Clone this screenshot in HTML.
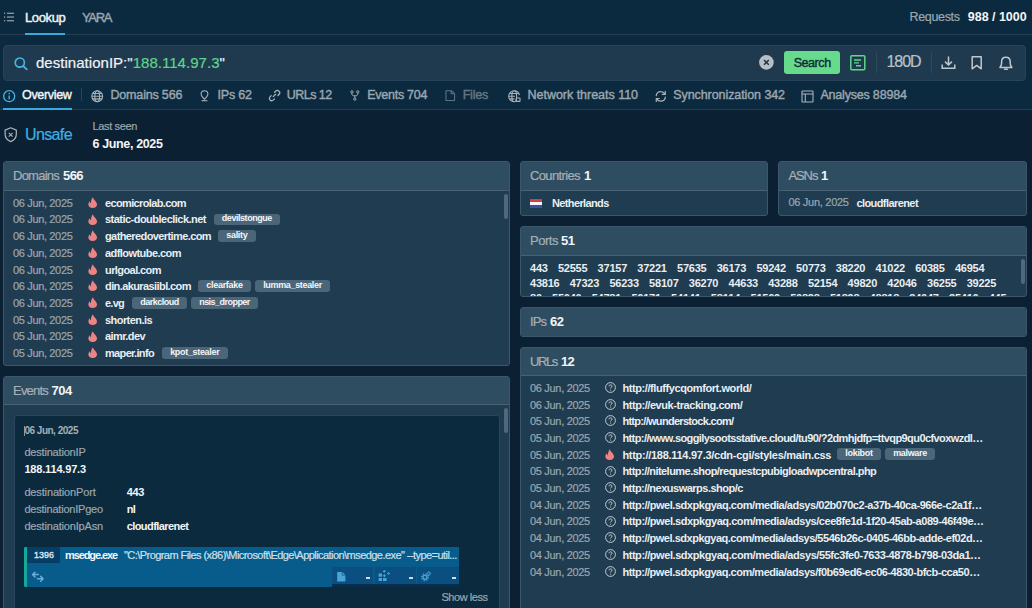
<!DOCTYPE html>
<html><head><meta charset="utf-8">
<style>
*{box-sizing:border-box;margin:0;padding:0}
html,body{width:1032px;height:608px;overflow:hidden;background:#0b2032;font-family:"Liberation Sans",sans-serif;color:#e8edf0}
.a{position:absolute;white-space:nowrap}
svg{position:absolute;overflow:visible}
</style></head><body>
<div class="a" style="left:0px;top:0px;width:1032px;height:109px;background:#0c2a3f;"></div>
<div class="a" style="left:0px;top:34px;width:1032px;height:1px;background:#243d50;"></div>
<div class="a" style="left:25px;top:33px;width:40px;height:2px;background:#3aa8d8;"></div>
<svg style="left:0;top:0" width="20" height="30"><g fill="#a3adb4"><rect x="4" y="12.6" width="1.2" height="1.2"/><rect x="4" y="16.4" width="1.2" height="1.2"/><rect x="4" y="20.1" width="1.2" height="1.2"/><rect x="7" y="12.7" width="7" height="1.1"/><rect x="7" y="16.5" width="7" height="1.1"/><rect x="7" y="20.2" width="7" height="1.1"/></g></svg>
<div class="a" style="left:25.00px;top:10.72px;font-size:13px;line-height:14.95px;color:#f2f5f7;-webkit-text-stroke:0.4px #f2f5f7;letter-spacing:-0.362px;">Lookup</div>
<div class="a" style="left:82.00px;top:10.72px;font-size:13px;line-height:14.95px;color:#9ba7af;-webkit-text-stroke:0.4px #9ba7af;letter-spacing:-1.359px;">YARA</div>
<div class="a" style="left:909.60px;top:9.88px;font-size:12.5px;line-height:14.37px;color:#9ba7af;-webkit-text-stroke:0.2px #9ba7af;letter-spacing:-0.352px;">Requests</div>
<div class="a" style="left:967.80px;top:9.88px;font-size:12.5px;line-height:14.37px;color:#f2f5f7;font-weight:bold;letter-spacing:-0.028px;">988 / 1000</div>
<div class="a" style="left:3px;top:45px;width:1023px;height:36px;background:#1f3a4e;border:1px solid #27435a;border-radius:4px"></div>
<svg style="left:14px;top:57px" width="15" height="13" viewBox="0 0 15 13"><circle cx="5.8" cy="5.6" r="4.6" fill="none" stroke="#45b4e4" stroke-width="1.7"/><path d="M9.2 9L12.8 12.4" stroke="#45b4e4" stroke-width="1.8" stroke-linecap="round"/></svg>
<div class="a" style="left:36px;top:52.7px;font-size:15px;line-height:20px;letter-spacing:0.03px;-webkit-text-stroke:0.2px;color:#f0f3f5">destinationIP:&quot;<span style="color:#5fd48a">188.114.97.3</span>&quot;</div>
<svg style="left:759px;top:55px" width="15" height="15" viewBox="0 0 15 15"><circle cx="7.4" cy="7.4" r="7.3" fill="#b7bfc5"/><path d="M5 5L9.8 9.8M9.8 5L5 9.8" stroke="#1d3447" stroke-width="1.5"/></svg>
<div class="a" style="left:784px;top:51px;width:56px;height:23px;background:#66db8c;border-radius:3px"></div>
<div class="a" style="left:793.70px;top:55.68px;font-size:12.5px;line-height:14.37px;color:#0f2b38;-webkit-text-stroke:0.4px #0f2b38;letter-spacing:-0.435px;">Search</div>
<svg style="left:850px;top:55px" width="16" height="16" viewBox="0 0 16 16"><rect x="0.8" y="0.8" width="14" height="14" rx="1" fill="none" stroke="#5ed68a" stroke-width="1.5"/><path d="M4 5H11M4 7.9H9M6 10.8H11" stroke="#5ed68a" stroke-width="1.4"/></svg>
<div class="a" style="left:876px;top:52px;width:1px;height:21px;background:#2f4a5d;"></div>
<div class="a" style="left:886.50px;top:52.76px;font-size:16px;line-height:18.4px;color:#b7c2ca;-webkit-text-stroke:0.2px #b7c2ca;letter-spacing:-1.070px;">180D</div>
<div class="a" style="left:931px;top:52px;width:1px;height:21px;background:#2f4a5d;"></div>
<svg style="left:941px;top:56px" width="16" height="14" viewBox="0 0 16 14"><path d="M7.5 0.5V9M4 5.6L7.5 9L11 5.6" fill="none" stroke="#c0c8ce" stroke-width="1.5"/><path d="M1.2 8.5V12.3H13.8V8.5" fill="none" stroke="#c0c8ce" stroke-width="1.5"/></svg>
<svg style="left:971px;top:56px" width="12" height="14" viewBox="0 0 12 14"><path d="M1.2 0.8H10.2V12.8L5.7 9.4L1.2 12.8Z" fill="none" stroke="#c0c8ce" stroke-width="1.5" stroke-linejoin="round"/></svg>
<svg style="left:998px;top:56px" width="16" height="15" viewBox="0 0 16 15"><path d="M2 11.4H13.8C12.6 10.2 12.2 9 12.2 7V5.8C12.2 3 10.3 1.2 7.9 1.2C5.5 1.2 3.6 3 3.6 5.8V7C3.6 9 3.2 10.2 2 11.4Z" fill="none" stroke="#c0c8ce" stroke-width="1.5" stroke-linejoin="round"/><path d="M6.5 13.2H9.3" stroke="#c0c8ce" stroke-width="1.5" stroke-linecap="round"/></svg>
<div class="a" style="left:0px;top:109px;width:1032px;height:1px;background:#243d50;"></div>
<div class="a" style="left:3px;top:108px;width:68.5px;height:2px;background:#3aa8d8;"></div>
<svg style="left:2.5px;top:89.5px" width="13" height="13" viewBox="0 0 13 13"><circle cx="6.2" cy="6.2" r="5.5" fill="none" stroke="#45b4e4" stroke-width="1.3"/><path d="M6.2 5.4V9.2" stroke="#45b4e4" stroke-width="1.4"/><circle cx="6.2" cy="3.6" r="0.8" fill="#45b4e4"/></svg>
<div class="a" style="left:22.00px;top:88.48px;font-size:12.5px;line-height:14.37px;color:#f2f5f7;-webkit-text-stroke:0.4px #f2f5f7;letter-spacing:-0.324px;">Overview</div>
<div class="a" style="left:81px;top:88px;width:1px;height:13px;background:#2b4558;"></div>
<svg style="left:91px;top:89.5px" width="13" height="13" viewBox="0 0 13 13"><g fill="none" stroke="#a9b3ba" stroke-width="1.1"><circle cx="6.2" cy="6.2" r="5.4"/><ellipse cx="6.2" cy="6.2" rx="2.4" ry="5.4"/><path d="M0.8 6.2H11.6M1.6 3.5H10.8M1.6 8.9H10.8"/></g></svg>
<div class="a" style="left:110.50px;top:88.48px;font-size:12.5px;line-height:14.37px;color:#9ba7af;-webkit-text-stroke:0.4px #9ba7af;letter-spacing:-0.178px;">Domains 566</div>
<svg style="left:200px;top:89.5px" width="10" height="13" viewBox="0 0 10 13"><g fill="none" stroke="#a9b3ba" stroke-width="1.1"><path d="M4.5 9.3C2.4 7.2 1.1 5.6 1.1 4.1A3.4 3.4 0 0 1 7.9 4.1C7.9 5.6 6.6 7.2 4.5 9.3Z"/><path d="M1.6 10.7H7.4"/></g></svg>
<div class="a" style="left:217.60px;top:88.48px;font-size:12.5px;line-height:14.37px;color:#9ba7af;-webkit-text-stroke:0.4px #9ba7af;letter-spacing:-0.240px;">IPs 62</div>
<svg style="left:268px;top:88.5px" width="13" height="13" viewBox="0 0 13 13"><g fill="none" stroke="#a9b3ba" stroke-width="1.3" stroke-linecap="round"><path d="M5.2 7.6L7.6 5.2"/><path d="M6.6 3.2L7.6 2.2C8.6 1.2 10.2 1.2 11 2.1C11.9 3 11.9 4.5 10.9 5.5L9.9 6.5"/><path d="M3.2 6.6L2.2 7.6C1.2 8.6 1.2 10.2 2.1 11C3 11.9 4.5 11.9 5.5 10.9L6.5 9.9"/></g></svg>
<div class="a" style="left:286.70px;top:88.48px;font-size:12.5px;line-height:14.37px;color:#9ba7af;-webkit-text-stroke:0.4px #9ba7af;letter-spacing:-0.520px;">URLs 12</div>
<svg style="left:349.5px;top:89.8px" width="10" height="11" viewBox="0 0 12 13" preserveAspectRatio="none"><g fill="none" stroke="#a9b3ba" stroke-width="1.1"><circle cx="2.3" cy="2.2" r="1.4"/><circle cx="9.3" cy="2.2" r="1.4"/><circle cx="5.8" cy="10.8" r="1.4"/><path d="M2.3 3.6V4.8C2.3 6 3.2 6.8 4.4 6.8H7.2C8.4 6.8 9.3 6 9.3 4.8V3.6M5.8 6.8V9.4"/></g></svg>
<div class="a" style="left:367.20px;top:88.48px;font-size:12.5px;line-height:14.37px;color:#9ba7af;-webkit-text-stroke:0.4px #9ba7af;letter-spacing:-0.255px;">Events 704</div>
<svg style="left:444.6px;top:89.8px" width="10.5" height="11.2" viewBox="0 0 11 13" preserveAspectRatio="none"><g fill="none" stroke="#62737f" stroke-width="1.1" stroke-linejoin="round"><path d="M1 0.8H6.6L10 4.2V12.2H1Z"/><path d="M6.4 0.8V4.4H10"/></g></svg>
<div class="a" style="left:462.70px;top:88.48px;font-size:12.5px;line-height:14.37px;color:#66777f;-webkit-text-stroke:0.4px #66777f;letter-spacing:-0.221px;">Files</div>
<svg style="left:508px;top:89.5px" width="13" height="13" viewBox="0 0 13 13"><g fill="none" stroke="#a9b3ba" stroke-width="1.1"><path d="M11.4 5.2C11 2.6 8.8 0.7 6.2 0.7C3.2 0.7 0.7 3.2 0.7 6.2C0.7 9.2 3.2 11.7 6.2 11.7"/><ellipse cx="6.2" cy="6.2" rx="2.4" ry="5.5"/><path d="M0.8 6.2H7M1.6 3.5H10.6M1.6 8.9H6.5"/><rect x="8.4" y="8" width="3.6" height="3.4" rx="0.5"/></g></svg>
<div class="a" style="left:527.50px;top:88.48px;font-size:12.5px;line-height:14.37px;color:#9ba7af;-webkit-text-stroke:0.4px #9ba7af;letter-spacing:-0.022px;">Network threats 110</div>
<svg style="left:655px;top:89.5px" width="12" height="13" viewBox="0 0 12 13"><g fill="none" stroke="#a9b3ba" stroke-width="1.2" stroke-linecap="round"><path d="M1.2 5.6C1.6 3.2 3.5 1.6 5.8 1.6C7.6 1.6 9 2.5 9.9 3.9"/><path d="M10.3 1.3V4.3H7.3"/><path d="M10.4 7.2C10 9.6 8.1 11.2 5.8 11.2C4 11.2 2.6 10.3 1.7 8.9"/><path d="M1.3 11.5V8.5H4.3"/></g></svg>
<div class="a" style="left:673.30px;top:88.48px;font-size:12.5px;line-height:14.37px;color:#9ba7af;-webkit-text-stroke:0.4px #9ba7af;letter-spacing:-0.083px;">Synchronization 342</div>
<svg style="left:801px;top:89.5px" width="13" height="13" viewBox="0 0 13 13"><g fill="none" stroke="#a9b3ba" stroke-width="1.1"><rect x="1" y="1" width="11" height="11" rx="0.6"/><path d="M1 4H12M4.3 4V12"/></g></svg>
<div class="a" style="left:820.40px;top:88.48px;font-size:12.5px;line-height:14.37px;color:#9ba7af;-webkit-text-stroke:0.4px #9ba7af;letter-spacing:-0.191px;">Analyses 88984</div>
<svg style="left:3.6px;top:127.3px" width="14" height="15.5" viewBox="0 0 15 16" preserveAspectRatio="none"><path d="M7.2 0.8L13.2 3.2V7.6C13.2 11.2 10.7 13.9 7.2 15.1C3.7 13.9 1.2 11.2 1.2 7.6V3.2Z" fill="none" stroke="#aab3ba" stroke-width="1.3" stroke-linejoin="round"/><path d="M5.2 6L9.2 10M9.2 6L5.2 10" stroke="#aab3ba" stroke-width="1.2"/></svg>
<div class="a" style="left:25.00px;top:126.26px;font-size:16px;line-height:18.4px;color:#3fb0e2;-webkit-text-stroke:0.2px #3fb0e2;letter-spacing:-0.622px;">Unsafe</div>
<div class="a" style="left:92.50px;top:119.86px;font-size:11px;line-height:12.65px;color:#9ba7af;-webkit-text-stroke:0.2px #9ba7af;letter-spacing:-0.361px;">Last seen</div>
<div class="a" style="left:92.50px;top:137.48px;font-size:12.5px;line-height:14.37px;color:#f2f5f7;font-weight:bold;letter-spacing:-0.363px;">6 June, 2025</div>
<div class="a" style="left:3px;top:161px;width:507px;height:205px;background:#203c51;border:1px solid #3c566a;border-radius:3px;overflow:hidden"><div style="position:absolute;left:0;top:0;right:0;height:29px;background:#2f4d61;border-bottom:1px solid #4a6174"></div></div>
<div class="a" style="left:13.00px;top:169.02px;font-size:13px;line-height:14.95px;color:#a6b0b7;-webkit-text-stroke:0.2px #a6b0b7;letter-spacing:-0.759px;">Domains</div>
<div class="a" style="left:63.00px;top:169.02px;font-size:13px;line-height:14.95px;color:#f2f5f7;font-weight:bold;letter-spacing:-0.568px;">566</div>
<div class="a" style="left:504px;top:194px;width:3.9px;height:25.3px;background:#4f697c;border-radius:2px"></div>
<div class="a" style="left:13.00px;top:196.76px;font-size:11px;line-height:12.65px;color:#9ba7af;-webkit-text-stroke:0.2px #9ba7af;letter-spacing:-0.349px;">06 Jun, 2025</div>
<svg style="left:88px;top:196.9px" width="9.4" height="11" viewBox="0 0 10 11" preserveAspectRatio="none"><path d="M5.2 0.2C5.6 1.8 6.6 2.6 7.6 3.7C8.8 5 9.6 6.2 9.6 7.6C9.6 9.6 7.7 11 5 11C2.3 11 0.4 9.6 0.4 7.5C0.4 6 1.2 4.9 2 4.2C2 5.2 2.4 6 3.1 6.3C3 4.4 3.6 2.3 5.2 0.2Z" fill="#ee8383"/></svg>
<div class="a" style="left:105.00px;top:196.76px;font-size:11px;line-height:12.65px;color:#e9eef1;font-weight:bold;letter-spacing:-0.635px;">ecomicrolab.com</div>
<div class="a" style="left:13.00px;top:213.46px;font-size:11px;line-height:12.65px;color:#9ba7af;-webkit-text-stroke:0.2px #9ba7af;letter-spacing:-0.349px;">06 Jun, 2025</div>
<svg style="left:88px;top:213.6px" width="9.4" height="11" viewBox="0 0 10 11" preserveAspectRatio="none"><path d="M5.2 0.2C5.6 1.8 6.6 2.6 7.6 3.7C8.8 5 9.6 6.2 9.6 7.6C9.6 9.6 7.7 11 5 11C2.3 11 0.4 9.6 0.4 7.5C0.4 6 1.2 4.9 2 4.2C2 5.2 2.4 6 3.1 6.3C3 4.4 3.6 2.3 5.2 0.2Z" fill="#ee8383"/></svg>
<div class="a" style="left:105.00px;top:213.46px;font-size:11px;line-height:12.65px;color:#e9eef1;font-weight:bold;letter-spacing:-0.524px;">static-doubleclick.net</div>
<div class="a" style="left:213.6px;top:213.5px;width:66.5px;height:11.6px;background:#4b6579;border-radius:3px"></div>
<div class="a" style="left:221.80px;top:213.41px;font-size:9px;line-height:10.35px;color:#f3f6f8;font-weight:bold;letter-spacing:-0.450px;">devilstongue</div>
<div class="a" style="left:13.00px;top:230.16px;font-size:11px;line-height:12.65px;color:#9ba7af;-webkit-text-stroke:0.2px #9ba7af;letter-spacing:-0.349px;">06 Jun, 2025</div>
<svg style="left:88px;top:230.3px" width="9.4" height="11" viewBox="0 0 10 11" preserveAspectRatio="none"><path d="M5.2 0.2C5.6 1.8 6.6 2.6 7.6 3.7C8.8 5 9.6 6.2 9.6 7.6C9.6 9.6 7.7 11 5 11C2.3 11 0.4 9.6 0.4 7.5C0.4 6 1.2 4.9 2 4.2C2 5.2 2.4 6 3.1 6.3C3 4.4 3.6 2.3 5.2 0.2Z" fill="#ee8383"/></svg>
<div class="a" style="left:105.00px;top:230.16px;font-size:11px;line-height:12.65px;color:#e9eef1;font-weight:bold;letter-spacing:-0.602px;">gatheredovertime.com</div>
<div class="a" style="left:218px;top:230.20000000000002px;width:37.7px;height:11.6px;background:#4b6579;border-radius:3px"></div>
<div class="a" style="left:226.20px;top:230.11px;font-size:9px;line-height:10.35px;color:#f3f6f8;font-weight:bold;letter-spacing:-0.283px;">sality</div>
<div class="a" style="left:13.00px;top:246.86px;font-size:11px;line-height:12.65px;color:#9ba7af;-webkit-text-stroke:0.2px #9ba7af;letter-spacing:-0.349px;">06 Jun, 2025</div>
<svg style="left:88px;top:247.0px" width="9.4" height="11" viewBox="0 0 10 11" preserveAspectRatio="none"><path d="M5.2 0.2C5.6 1.8 6.6 2.6 7.6 3.7C8.8 5 9.6 6.2 9.6 7.6C9.6 9.6 7.7 11 5 11C2.3 11 0.4 9.6 0.4 7.5C0.4 6 1.2 4.9 2 4.2C2 5.2 2.4 6 3.1 6.3C3 4.4 3.6 2.3 5.2 0.2Z" fill="#ee8383"/></svg>
<div class="a" style="left:105.00px;top:246.86px;font-size:11px;line-height:12.65px;color:#e9eef1;font-weight:bold;letter-spacing:-0.554px;">adflowtube.com</div>
<div class="a" style="left:13.00px;top:263.56px;font-size:11px;line-height:12.65px;color:#9ba7af;-webkit-text-stroke:0.2px #9ba7af;letter-spacing:-0.349px;">06 Jun, 2025</div>
<svg style="left:88px;top:263.7px" width="9.4" height="11" viewBox="0 0 10 11" preserveAspectRatio="none"><path d="M5.2 0.2C5.6 1.8 6.6 2.6 7.6 3.7C8.8 5 9.6 6.2 9.6 7.6C9.6 9.6 7.7 11 5 11C2.3 11 0.4 9.6 0.4 7.5C0.4 6 1.2 4.9 2 4.2C2 5.2 2.4 6 3.1 6.3C3 4.4 3.6 2.3 5.2 0.2Z" fill="#ee8383"/></svg>
<div class="a" style="left:105.00px;top:263.56px;font-size:11px;line-height:12.65px;color:#e9eef1;font-weight:bold;letter-spacing:-0.580px;">urlgoal.com</div>
<div class="a" style="left:13.00px;top:280.26px;font-size:11px;line-height:12.65px;color:#9ba7af;-webkit-text-stroke:0.2px #9ba7af;letter-spacing:-0.349px;">06 Jun, 2025</div>
<svg style="left:88px;top:280.4px" width="9.4" height="11" viewBox="0 0 10 11" preserveAspectRatio="none"><path d="M5.2 0.2C5.6 1.8 6.6 2.6 7.6 3.7C8.8 5 9.6 6.2 9.6 7.6C9.6 9.6 7.7 11 5 11C2.3 11 0.4 9.6 0.4 7.5C0.4 6 1.2 4.9 2 4.2C2 5.2 2.4 6 3.1 6.3C3 4.4 3.6 2.3 5.2 0.2Z" fill="#ee8383"/></svg>
<div class="a" style="left:105.00px;top:280.26px;font-size:11px;line-height:12.65px;color:#e9eef1;font-weight:bold;letter-spacing:-0.592px;">din.akurasiibl.com</div>
<div class="a" style="left:198px;top:280.29999999999995px;width:53px;height:11.6px;background:#4b6579;border-radius:3px"></div>
<div class="a" style="left:206.20px;top:280.21px;font-size:9px;line-height:10.35px;color:#f3f6f8;font-weight:bold;letter-spacing:-0.267px;">clearfake</div>
<div class="a" style="left:255px;top:280.29999999999995px;width:75px;height:11.6px;background:#4b6579;border-radius:3px"></div>
<div class="a" style="left:263.20px;top:280.21px;font-size:9px;line-height:10.35px;color:#f3f6f8;font-weight:bold;letter-spacing:-0.338px;">lumma_stealer</div>
<div class="a" style="left:13.00px;top:296.96px;font-size:11px;line-height:12.65px;color:#9ba7af;-webkit-text-stroke:0.2px #9ba7af;letter-spacing:-0.349px;">06 Jun, 2025</div>
<svg style="left:88px;top:297.1px" width="9.4" height="11" viewBox="0 0 10 11" preserveAspectRatio="none"><path d="M5.2 0.2C5.6 1.8 6.6 2.6 7.6 3.7C8.8 5 9.6 6.2 9.6 7.6C9.6 9.6 7.7 11 5 11C2.3 11 0.4 9.6 0.4 7.5C0.4 6 1.2 4.9 2 4.2C2 5.2 2.4 6 3.1 6.3C3 4.4 3.6 2.3 5.2 0.2Z" fill="#ee8383"/></svg>
<div class="a" style="left:105.00px;top:296.96px;font-size:11px;line-height:12.65px;color:#e9eef1;font-weight:bold;letter-spacing:-0.758px;">e.vg</div>
<div class="a" style="left:132px;top:297.0px;width:55px;height:11.6px;background:#4b6579;border-radius:3px"></div>
<div class="a" style="left:140.20px;top:296.91px;font-size:9px;line-height:10.35px;color:#f3f6f8;font-weight:bold;letter-spacing:-0.489px;">darkcloud</div>
<div class="a" style="left:191px;top:297.0px;width:67px;height:11.6px;background:#4b6579;border-radius:3px"></div>
<div class="a" style="left:199.20px;top:296.91px;font-size:9px;line-height:10.35px;color:#f3f6f8;font-weight:bold;letter-spacing:-0.533px;">nsis_dropper</div>
<div class="a" style="left:13.00px;top:313.66px;font-size:11px;line-height:12.65px;color:#9ba7af;-webkit-text-stroke:0.2px #9ba7af;letter-spacing:-0.349px;">05 Jun, 2025</div>
<svg style="left:88px;top:313.8px" width="9.4" height="11" viewBox="0 0 10 11" preserveAspectRatio="none"><path d="M5.2 0.2C5.6 1.8 6.6 2.6 7.6 3.7C8.8 5 9.6 6.2 9.6 7.6C9.6 9.6 7.7 11 5 11C2.3 11 0.4 9.6 0.4 7.5C0.4 6 1.2 4.9 2 4.2C2 5.2 2.4 6 3.1 6.3C3 4.4 3.6 2.3 5.2 0.2Z" fill="#ee8383"/></svg>
<div class="a" style="left:105.00px;top:313.66px;font-size:11px;line-height:12.65px;color:#e9eef1;font-weight:bold;letter-spacing:-0.559px;">shorten.is</div>
<div class="a" style="left:13.00px;top:330.36px;font-size:11px;line-height:12.65px;color:#9ba7af;-webkit-text-stroke:0.2px #9ba7af;letter-spacing:-0.349px;">05 Jun, 2025</div>
<svg style="left:88px;top:330.5px" width="9.4" height="11" viewBox="0 0 10 11" preserveAspectRatio="none"><path d="M5.2 0.2C5.6 1.8 6.6 2.6 7.6 3.7C8.8 5 9.6 6.2 9.6 7.6C9.6 9.6 7.7 11 5 11C2.3 11 0.4 9.6 0.4 7.5C0.4 6 1.2 4.9 2 4.2C2 5.2 2.4 6 3.1 6.3C3 4.4 3.6 2.3 5.2 0.2Z" fill="#ee8383"/></svg>
<div class="a" style="left:105.00px;top:330.36px;font-size:11px;line-height:12.65px;color:#e9eef1;font-weight:bold;letter-spacing:-0.584px;">aimr.dev</div>
<div class="a" style="left:13.00px;top:347.06px;font-size:11px;line-height:12.65px;color:#9ba7af;-webkit-text-stroke:0.2px #9ba7af;letter-spacing:-0.349px;">05 Jun, 2025</div>
<svg style="left:88px;top:347.2px" width="9.4" height="11" viewBox="0 0 10 11" preserveAspectRatio="none"><path d="M5.2 0.2C5.6 1.8 6.6 2.6 7.6 3.7C8.8 5 9.6 6.2 9.6 7.6C9.6 9.6 7.7 11 5 11C2.3 11 0.4 9.6 0.4 7.5C0.4 6 1.2 4.9 2 4.2C2 5.2 2.4 6 3.1 6.3C3 4.4 3.6 2.3 5.2 0.2Z" fill="#ee8383"/></svg>
<div class="a" style="left:105.00px;top:347.06px;font-size:11px;line-height:12.65px;color:#e9eef1;font-weight:bold;letter-spacing:-0.664px;">maper.info</div>
<div class="a" style="left:162px;top:347.09999999999997px;width:65.5px;height:11.6px;background:#4b6579;border-radius:3px"></div>
<div class="a" style="left:170.20px;top:347.01px;font-size:9px;line-height:10.35px;color:#f3f6f8;font-weight:bold;letter-spacing:-0.325px;">kpot_stealer</div>
<div class="a" style="left:3px;top:376px;width:507px;height:240px;background:#203c51;border:1px solid #3c566a;border-radius:3px;overflow:hidden"><div style="position:absolute;left:0;top:0;right:0;height:28px;background:#2f4d61;border-bottom:1px solid #4a6174"></div></div>
<div class="a" style="left:13.00px;top:383.62px;font-size:13px;line-height:14.95px;color:#a6b0b7;-webkit-text-stroke:0.2px #a6b0b7;letter-spacing:-0.792px;">Events</div>
<div class="a" style="left:51.60px;top:383.62px;font-size:13px;line-height:14.95px;color:#f2f5f7;font-weight:bold;letter-spacing:-0.501px;">704</div>
<div class="a" style="left:504px;top:408px;width:3.9px;height:25.3px;background:#4f697c;border-radius:2px"></div>
<div class="a" style="left:14px;top:415px;width:486px;height:200px;background:#0b2a3e;border:1px solid #29465a;border-radius:3px"></div>
<div class="a" style="left:24px;top:426px;width:1px;height:10px;background:#8a98a2;"></div>
<div class="a" style="left:24.40px;top:425.38px;font-size:10px;line-height:11.5px;color:#a3afb7;font-weight:bold;letter-spacing:-0.492px;">06 Jun, 2025</div>
<div class="a" style="left:24.40px;top:446.16px;font-size:11px;line-height:12.65px;color:#9ba7af;-webkit-text-stroke:0.2px #9ba7af;letter-spacing:-0.189px;">destinationIP</div>
<div class="a" style="left:24.40px;top:462.86px;font-size:11px;line-height:12.65px;color:#f2f5f7;font-weight:bold;letter-spacing:-0.175px;">188.114.97.3</div>
<div class="a" style="left:24.40px;top:486.36px;font-size:11px;line-height:12.65px;color:#9ba7af;-webkit-text-stroke:0.2px #9ba7af;letter-spacing:-0.143px;">destinationPort</div>
<div class="a" style="left:126.70px;top:486.36px;font-size:11px;line-height:12.65px;color:#f2f5f7;font-weight:bold;letter-spacing:-0.358px;">443</div>
<div class="a" style="left:24.40px;top:503.06px;font-size:11px;line-height:12.65px;color:#9ba7af;-webkit-text-stroke:0.2px #9ba7af;letter-spacing:-0.214px;">destinationIPgeo</div>
<div class="a" style="left:126.70px;top:503.06px;font-size:11px;line-height:12.65px;color:#f2f5f7;font-weight:bold;letter-spacing:-0.641px;">nl</div>
<div class="a" style="left:24.40px;top:519.86px;font-size:11px;line-height:12.65px;color:#9ba7af;-webkit-text-stroke:0.2px #9ba7af;letter-spacing:-0.175px;">destinationIpAsn</div>
<div class="a" style="left:126.70px;top:519.86px;font-size:11px;line-height:12.65px;color:#f2f5f7;font-weight:bold;letter-spacing:-0.569px;">cloudflarenet</div>
<div class="a" style="left:24px;top:547px;width:435px;height:40px;background:#075c8c;"></div>
<div class="a" style="left:24px;top:547px;width:3px;height:40px;background:#14a99a;border-radius:2px 0 0 2px"></div>
<div class="a" style="left:27px;top:547px;width:33px;height:16px;background:#073d64;"></div>
<div class="a" style="left:34.00px;top:550.29px;font-size:8.8px;line-height:10.12px;color:#d6e3ec;-webkit-text-stroke:0.4px #d6e3ec;letter-spacing:0.109px;">1396</div>
<div class="a" style="left:65.00px;top:549.36px;font-size:11px;line-height:12.65px;color:#f2f5f7;font-weight:bold;letter-spacing:-1.103px;">msedge.exe</div>
<div class="a" style="left:124.00px;top:549.36px;font-size:11px;line-height:12.65px;color:#cfe0ea;-webkit-text-stroke:0.2px #cfe0ea;letter-spacing:-0.555px;">&quot;C:\Program Files (x86)\Microsoft\Edge\Application\msedge.exe&quot; --type=util...</div>
<svg style="left:31px;top:571px" width="14" height="12" viewBox="0 0 14 12"><g fill="none" stroke="#6aaedb" stroke-width="1.5" stroke-linejoin="round" stroke-linecap="round"><path d="M4 1.2L1.6 3.6L4 6M1.6 3.6H7.3"/><path d="M9.7 5.4L12.1 7.8L9.7 10.2M12.1 7.8H6.4"/></g></svg>
<div class="a" style="left:332px;top:567px;width:127px;height:17px;background:#0a4f80;"></div>
<div class="a" style="left:332px;top:584px;width:127px;height:3px;background:#082d4d;"></div>
<div class="a" style="left:373.2px;top:567px;width:2px;height:17px;background:#075c8c;"></div>
<div class="a" style="left:416px;top:567px;width:1.3px;height:17px;background:#075c8c;"></div>
<svg style="left:337px;top:571.5px" width="9" height="10" viewBox="0 0 9 10"><path d="M0.2 0H5.4L8.4 3V9.6H0.2Z" fill="#4aa3d6"/><path d="M5.2 0.2V3.2H8.2" fill="none" stroke="#0a4f80" stroke-width="0.7"/></svg>
<div class="a" style="left:366px;top:577.2px;width:3.8px;height:1.8px;background:#d0dde6;"></div>
<svg style="left:378px;top:570px" width="12" height="12" viewBox="0 0 12 12"><g fill="#4aa3d6"><rect x="0.6" y="3.5" width="3.4" height="3.2"/><rect x="0.6" y="8" width="3.4" height="3"/><rect x="5" y="8" width="3.6" height="3"/></g><g stroke="#4aa3d6" stroke-width="1.2"><path d="M6.3 0V2.6M5 1.3H7.6M10.5 2.2V4.8M9.2 3.5H11.8M6.4 4.3V6.9M5.1 5.6H7.7"/></g></svg>
<div class="a" style="left:409px;top:577.2px;width:3.8px;height:1.8px;background:#d0dde6;"></div>
<svg style="left:419px;top:568px" width="14" height="14" viewBox="0 0 14 14"><g fill="none" stroke="#4aa3d6"><circle cx="6" cy="9.2" r="2" stroke-width="1.4"/><circle cx="6" cy="9.2" r="3.4" stroke-width="1.3" stroke-dasharray="1.3 1.37"/><circle cx="9.8" cy="5.5" r="1.2" stroke-width="0.9"/><circle cx="9.8" cy="5.5" r="2" stroke-width="0.8" stroke-dasharray="0.8 0.77"/></g></svg>
<div class="a" style="left:452px;top:577.2px;width:3.8px;height:1.8px;background:#d0dde6;"></div>
<div class="a" style="left:441.40px;top:590.66px;font-size:11px;line-height:12.65px;color:#9ba7af;-webkit-text-stroke:0.2px #9ba7af;letter-spacing:-0.428px;">Show less</div>
<div class="a" style="left:520px;top:161px;width:248px;height:55px;background:#203c51;border:1px solid #3c566a;border-radius:3px;overflow:hidden"><div style="position:absolute;left:0;top:0;right:0;height:29px;background:#2f4d61;border-bottom:1px solid #4a6174"></div></div>
<div class="a" style="left:530.00px;top:169.02px;font-size:13px;line-height:14.95px;color:#a6b0b7;-webkit-text-stroke:0.2px #a6b0b7;letter-spacing:-0.628px;">Countries</div>
<div class="a" style="left:584.00px;top:169.02px;font-size:13px;line-height:14.95px;color:#f2f5f7;font-weight:bold;">1</div>
<svg style="left:530px;top:199px" width="12" height="9"><rect width="12" height="3" fill="#c8414b"/><rect y="3" width="12" height="3" fill="#f5f5f5"/><rect y="6" width="12" height="3" fill="#3e4f9c"/></svg>
<div class="a" style="left:552.00px;top:196.86px;font-size:11px;line-height:12.65px;color:#e9eef1;font-weight:bold;letter-spacing:-0.627px;">Netherlands</div>
<div class="a" style="left:778px;top:161px;width:249px;height:55px;background:#203c51;border:1px solid #3c566a;border-radius:3px;overflow:hidden"><div style="position:absolute;left:0;top:0;right:0;height:29px;background:#2f4d61;border-bottom:1px solid #4a6174"></div></div>
<div class="a" style="left:788.40px;top:169.02px;font-size:13px;line-height:14.95px;color:#a6b0b7;-webkit-text-stroke:0.2px #a6b0b7;letter-spacing:-1.059px;">ASNs</div>
<div class="a" style="left:821.00px;top:169.02px;font-size:13px;line-height:14.95px;color:#f2f5f7;font-weight:bold;">1</div>
<div class="a" style="left:788.40px;top:196.46px;font-size:11px;line-height:12.65px;color:#9ba7af;-webkit-text-stroke:0.2px #9ba7af;letter-spacing:-0.274px;">06 Jun, 2025</div>
<div class="a" style="left:856.40px;top:196.86px;font-size:11px;line-height:12.65px;color:#e9eef1;font-weight:bold;letter-spacing:-0.576px;">cloudflarenet</div>
<div class="a" style="left:520px;top:226px;width:507px;height:71px;background:#203c51;border:1px solid #3c566a;border-radius:3px;overflow:hidden"><div style="position:absolute;left:0;top:0;right:0;height:29px;background:#2f4d61;border-bottom:1px solid #4a6174"></div></div>
<div class="a" style="left:530.00px;top:234.02px;font-size:13px;line-height:14.95px;color:#a6b0b7;-webkit-text-stroke:0.2px #a6b0b7;letter-spacing:-0.469px;">Ports</div>
<div class="a" style="left:561.00px;top:234.02px;font-size:13px;line-height:14.95px;color:#f2f5f7;font-weight:bold;letter-spacing:-0.484px;">51</div>
<div class="a" style="left:1021px;top:259px;width:3.9px;height:25.3px;background:#4f697c;border-radius:2px"></div>
<div class="a" style="left:521px;top:256px;width:498px;height:40px;overflow:hidden">
<div class="a" style="left:9.00px;top:5.86px;font-size:11px;line-height:12.65px;color:#e9eef1;font-weight:bold;letter-spacing:-0.225px;">443</div>
<div class="a" style="left:36.90px;top:5.86px;font-size:11px;line-height:12.65px;color:#e9eef1;font-weight:bold;letter-spacing:-0.225px;">52555</div>
<div class="a" style="left:76.60px;top:5.86px;font-size:11px;line-height:12.65px;color:#e9eef1;font-weight:bold;letter-spacing:-0.225px;">37157</div>
<div class="a" style="left:116.30px;top:5.86px;font-size:11px;line-height:12.65px;color:#e9eef1;font-weight:bold;letter-spacing:-0.225px;">37221</div>
<div class="a" style="left:156.00px;top:5.86px;font-size:11px;line-height:12.65px;color:#e9eef1;font-weight:bold;letter-spacing:-0.225px;">57635</div>
<div class="a" style="left:195.70px;top:5.86px;font-size:11px;line-height:12.65px;color:#e9eef1;font-weight:bold;letter-spacing:-0.225px;">36173</div>
<div class="a" style="left:235.40px;top:5.86px;font-size:11px;line-height:12.65px;color:#e9eef1;font-weight:bold;letter-spacing:-0.225px;">59242</div>
<div class="a" style="left:275.10px;top:5.86px;font-size:11px;line-height:12.65px;color:#e9eef1;font-weight:bold;letter-spacing:-0.225px;">50773</div>
<div class="a" style="left:314.80px;top:5.86px;font-size:11px;line-height:12.65px;color:#e9eef1;font-weight:bold;letter-spacing:-0.225px;">38220</div>
<div class="a" style="left:354.50px;top:5.86px;font-size:11px;line-height:12.65px;color:#e9eef1;font-weight:bold;letter-spacing:-0.225px;">41022</div>
<div class="a" style="left:394.20px;top:5.86px;font-size:11px;line-height:12.65px;color:#e9eef1;font-weight:bold;letter-spacing:-0.225px;">60385</div>
<div class="a" style="left:433.90px;top:5.86px;font-size:11px;line-height:12.65px;color:#e9eef1;font-weight:bold;letter-spacing:-0.225px;">46954</div>
<div class="a" style="left:9.00px;top:20.86px;font-size:11px;line-height:12.65px;color:#e9eef1;font-weight:bold;letter-spacing:-0.225px;">43816</div>
<div class="a" style="left:48.70px;top:20.86px;font-size:11px;line-height:12.65px;color:#e9eef1;font-weight:bold;letter-spacing:-0.225px;">47323</div>
<div class="a" style="left:88.40px;top:20.86px;font-size:11px;line-height:12.65px;color:#e9eef1;font-weight:bold;letter-spacing:-0.225px;">56233</div>
<div class="a" style="left:128.10px;top:20.86px;font-size:11px;line-height:12.65px;color:#e9eef1;font-weight:bold;letter-spacing:-0.225px;">58107</div>
<div class="a" style="left:167.80px;top:20.86px;font-size:11px;line-height:12.65px;color:#e9eef1;font-weight:bold;letter-spacing:-0.225px;">36270</div>
<div class="a" style="left:207.50px;top:20.86px;font-size:11px;line-height:12.65px;color:#e9eef1;font-weight:bold;letter-spacing:-0.225px;">44633</div>
<div class="a" style="left:247.20px;top:20.86px;font-size:11px;line-height:12.65px;color:#e9eef1;font-weight:bold;letter-spacing:-0.225px;">43288</div>
<div class="a" style="left:286.90px;top:20.86px;font-size:11px;line-height:12.65px;color:#e9eef1;font-weight:bold;letter-spacing:-0.225px;">52154</div>
<div class="a" style="left:326.60px;top:20.86px;font-size:11px;line-height:12.65px;color:#e9eef1;font-weight:bold;letter-spacing:-0.225px;">49820</div>
<div class="a" style="left:366.30px;top:20.86px;font-size:11px;line-height:12.65px;color:#e9eef1;font-weight:bold;letter-spacing:-0.225px;">42046</div>
<div class="a" style="left:406.00px;top:20.86px;font-size:11px;line-height:12.65px;color:#e9eef1;font-weight:bold;letter-spacing:-0.225px;">36255</div>
<div class="a" style="left:445.70px;top:20.86px;font-size:11px;line-height:12.65px;color:#e9eef1;font-weight:bold;letter-spacing:-0.225px;">39225</div>
<div class="a" style="left:9.00px;top:35.86px;font-size:11px;line-height:12.65px;color:#e9eef1;font-weight:bold;letter-spacing:-0.225px;">80</div>
<div class="a" style="left:31.00px;top:35.86px;font-size:11px;line-height:12.65px;color:#e9eef1;font-weight:bold;letter-spacing:-0.225px;">55640</div>
<div class="a" style="left:70.70px;top:35.86px;font-size:11px;line-height:12.65px;color:#e9eef1;font-weight:bold;letter-spacing:-0.225px;">54781</div>
<div class="a" style="left:110.40px;top:35.86px;font-size:11px;line-height:12.65px;color:#e9eef1;font-weight:bold;letter-spacing:-0.225px;">56171</div>
<div class="a" style="left:150.10px;top:35.86px;font-size:11px;line-height:12.65px;color:#e9eef1;font-weight:bold;letter-spacing:-0.225px;">54141</div>
<div class="a" style="left:189.80px;top:35.86px;font-size:11px;line-height:12.65px;color:#e9eef1;font-weight:bold;letter-spacing:-0.103px;">58114</div>
<div class="a" style="left:229.50px;top:35.86px;font-size:11px;line-height:12.65px;color:#e9eef1;font-weight:bold;letter-spacing:-0.225px;">51569</div>
<div class="a" style="left:269.20px;top:35.86px;font-size:11px;line-height:12.65px;color:#e9eef1;font-weight:bold;letter-spacing:-0.225px;">50828</div>
<div class="a" style="left:308.90px;top:35.86px;font-size:11px;line-height:12.65px;color:#e9eef1;font-weight:bold;letter-spacing:-0.225px;">51898</div>
<div class="a" style="left:348.60px;top:35.86px;font-size:11px;line-height:12.65px;color:#e9eef1;font-weight:bold;letter-spacing:-0.225px;">48818</div>
<div class="a" style="left:388.30px;top:35.86px;font-size:11px;line-height:12.65px;color:#e9eef1;font-weight:bold;letter-spacing:-0.225px;">34047</div>
<div class="a" style="left:428.00px;top:35.86px;font-size:11px;line-height:12.65px;color:#e9eef1;font-weight:bold;letter-spacing:-0.225px;">35416</div>
<div class="a" style="left:467.70px;top:35.86px;font-size:11px;line-height:12.65px;color:#e9eef1;font-weight:bold;letter-spacing:-0.225px;">445</div>
</div>
<div class="a" style="left:520px;top:307px;width:507px;height:30px;background:#203c51;border:1px solid #3c566a;border-radius:3px;overflow:hidden"><div style="position:absolute;left:0;top:0;right:0;height:29px;background:#2f4d61;border-bottom:1px solid #4a6174"></div></div>
<div class="a" style="left:530.00px;top:315.02px;font-size:13px;line-height:14.95px;color:#a6b0b7;-webkit-text-stroke:0.2px #a6b0b7;letter-spacing:-0.927px;">IPs</div>
<div class="a" style="left:550.00px;top:315.02px;font-size:13px;line-height:14.95px;color:#f2f5f7;font-weight:bold;letter-spacing:-0.534px;">62</div>
<div class="a" style="left:520px;top:347px;width:507px;height:270px;background:#203c51;border:1px solid #3c566a;border-radius:3px;overflow:hidden"><div style="position:absolute;left:0;top:0;right:0;height:28px;background:#2f4d61;border-bottom:1px solid #4a6174"></div></div>
<div class="a" style="left:530.00px;top:354.82px;font-size:13px;line-height:14.95px;color:#a6b0b7;-webkit-text-stroke:0.2px #a6b0b7;letter-spacing:-1.379px;">URLs</div>
<div class="a" style="left:561.00px;top:354.82px;font-size:13px;line-height:14.95px;color:#f2f5f7;font-weight:bold;letter-spacing:-0.734px;">12</div>
<div class="a" style="left:530.00px;top:381.86px;font-size:11px;line-height:12.65px;color:#9ba7af;-webkit-text-stroke:0.2px #9ba7af;letter-spacing:-0.307px;">06 Jun, 2025</div>
<svg style="left:604.5px;top:382.0px" width="11" height="11" viewBox="0 0 11 11"><circle cx="5.5" cy="5.5" r="4.9" fill="none" stroke="#c5ccd1" stroke-width="1"/><path d="M4 4.3C4 3.4 4.7 2.8 5.5 2.8C6.3 2.8 7 3.4 7 4.2C7 5.2 5.6 5.3 5.6 6.4" fill="none" stroke="#c5ccd1" stroke-width="1"/><circle cx="5.6" cy="8" r="0.6" fill="#c5ccd1"/></svg>
<div class="a" style="left:622.40px;top:381.86px;font-size:11px;line-height:12.65px;color:#e9eef1;font-weight:bold;letter-spacing:-0.412px;">http://fluffycqomfort.world/</div>
<div class="a" style="left:530.00px;top:398.56px;font-size:11px;line-height:12.65px;color:#9ba7af;-webkit-text-stroke:0.2px #9ba7af;letter-spacing:-0.307px;">06 Jun, 2025</div>
<svg style="left:604.5px;top:398.7px" width="11" height="11" viewBox="0 0 11 11"><circle cx="5.5" cy="5.5" r="4.9" fill="none" stroke="#c5ccd1" stroke-width="1"/><path d="M4 4.3C4 3.4 4.7 2.8 5.5 2.8C6.3 2.8 7 3.4 7 4.2C7 5.2 5.6 5.3 5.6 6.4" fill="none" stroke="#c5ccd1" stroke-width="1"/><circle cx="5.6" cy="8" r="0.6" fill="#c5ccd1"/></svg>
<div class="a" style="left:622.40px;top:398.56px;font-size:11px;line-height:12.65px;color:#e9eef1;font-weight:bold;letter-spacing:-0.434px;">http://evuk-tracking.com/</div>
<div class="a" style="left:530.00px;top:415.26px;font-size:11px;line-height:12.65px;color:#9ba7af;-webkit-text-stroke:0.2px #9ba7af;letter-spacing:-0.307px;">05 Jun, 2025</div>
<svg style="left:604.5px;top:415.4px" width="11" height="11" viewBox="0 0 11 11"><circle cx="5.5" cy="5.5" r="4.9" fill="none" stroke="#c5ccd1" stroke-width="1"/><path d="M4 4.3C4 3.4 4.7 2.8 5.5 2.8C6.3 2.8 7 3.4 7 4.2C7 5.2 5.6 5.3 5.6 6.4" fill="none" stroke="#c5ccd1" stroke-width="1"/><circle cx="5.6" cy="8" r="0.6" fill="#c5ccd1"/></svg>
<div class="a" style="left:622.40px;top:415.26px;font-size:11px;line-height:12.65px;color:#e9eef1;font-weight:bold;letter-spacing:-0.702px;">http://wunderstock.com/</div>
<div class="a" style="left:530.00px;top:431.96px;font-size:11px;line-height:12.65px;color:#9ba7af;-webkit-text-stroke:0.2px #9ba7af;letter-spacing:-0.307px;">05 Jun, 2025</div>
<svg style="left:604.5px;top:432.1px" width="11" height="11" viewBox="0 0 11 11"><circle cx="5.5" cy="5.5" r="4.9" fill="none" stroke="#c5ccd1" stroke-width="1"/><path d="M4 4.3C4 3.4 4.7 2.8 5.5 2.8C6.3 2.8 7 3.4 7 4.2C7 5.2 5.6 5.3 5.6 6.4" fill="none" stroke="#c5ccd1" stroke-width="1"/><circle cx="5.6" cy="8" r="0.6" fill="#c5ccd1"/></svg>
<div class="a" style="left:622.40px;top:431.96px;font-size:11px;line-height:12.65px;color:#e9eef1;font-weight:bold;letter-spacing:-0.579px;">http://www.soggilysootsstative.cloud/tu90/?2dmhjdfp=ttvqp9qu0cfvoxwzdl…</div>
<div class="a" style="left:530.00px;top:448.66px;font-size:11px;line-height:12.65px;color:#9ba7af;-webkit-text-stroke:0.2px #9ba7af;letter-spacing:-0.307px;">05 Jun, 2025</div>
<svg style="left:605px;top:448.8px" width="9.4" height="11" viewBox="0 0 10 11" preserveAspectRatio="none"><path d="M5.2 0.2C5.6 1.8 6.6 2.6 7.6 3.7C8.8 5 9.6 6.2 9.6 7.6C9.6 9.6 7.7 11 5 11C2.3 11 0.4 9.6 0.4 7.5C0.4 6 1.2 4.9 2 4.2C2 5.2 2.4 6 3.1 6.3C3 4.4 3.6 2.3 5.2 0.2Z" fill="#ee8383"/></svg>
<div class="a" style="left:622.40px;top:448.66px;font-size:11px;line-height:12.65px;color:#e9eef1;font-weight:bold;letter-spacing:-0.277px;">http://188.114.97.3/cdn-cgi/styles/main.css</div>
<div class="a" style="left:837px;top:448.2px;width:44px;height:11.6px;background:#4b6579;border-radius:3px"></div>
<div class="a" style="left:845.20px;top:448.11px;font-size:9px;line-height:10.35px;color:#f3f6f8;font-weight:bold;letter-spacing:-0.271px;">lokibot</div>
<div class="a" style="left:885px;top:448.2px;width:50px;height:11.6px;background:#4b6579;border-radius:3px"></div>
<div class="a" style="left:893.20px;top:448.11px;font-size:9px;line-height:10.35px;color:#f3f6f8;font-weight:bold;letter-spacing:-0.343px;">malware</div>
<div class="a" style="left:530.00px;top:465.36px;font-size:11px;line-height:12.65px;color:#9ba7af;-webkit-text-stroke:0.2px #9ba7af;letter-spacing:-0.307px;">05 Jun, 2025</div>
<svg style="left:604.5px;top:465.5px" width="11" height="11" viewBox="0 0 11 11"><circle cx="5.5" cy="5.5" r="4.9" fill="none" stroke="#c5ccd1" stroke-width="1"/><path d="M4 4.3C4 3.4 4.7 2.8 5.5 2.8C6.3 2.8 7 3.4 7 4.2C7 5.2 5.6 5.3 5.6 6.4" fill="none" stroke="#c5ccd1" stroke-width="1"/><circle cx="5.6" cy="8" r="0.6" fill="#c5ccd1"/></svg>
<div class="a" style="left:622.40px;top:465.36px;font-size:11px;line-height:12.65px;color:#e9eef1;font-weight:bold;letter-spacing:-0.534px;">http://nitelume.shop/requestcpubigloadwpcentral.php</div>
<div class="a" style="left:530.00px;top:482.06px;font-size:11px;line-height:12.65px;color:#9ba7af;-webkit-text-stroke:0.2px #9ba7af;letter-spacing:-0.307px;">05 Jun, 2025</div>
<svg style="left:604.5px;top:482.2px" width="11" height="11" viewBox="0 0 11 11"><circle cx="5.5" cy="5.5" r="4.9" fill="none" stroke="#c5ccd1" stroke-width="1"/><path d="M4 4.3C4 3.4 4.7 2.8 5.5 2.8C6.3 2.8 7 3.4 7 4.2C7 5.2 5.6 5.3 5.6 6.4" fill="none" stroke="#c5ccd1" stroke-width="1"/><circle cx="5.6" cy="8" r="0.6" fill="#c5ccd1"/></svg>
<div class="a" style="left:622.40px;top:482.06px;font-size:11px;line-height:12.65px;color:#e9eef1;font-weight:bold;letter-spacing:-0.508px;">http://nexuswarps.shop/c</div>
<div class="a" style="left:530.00px;top:498.76px;font-size:11px;line-height:12.65px;color:#9ba7af;-webkit-text-stroke:0.2px #9ba7af;letter-spacing:-0.307px;">04 Jun, 2025</div>
<svg style="left:604.5px;top:498.9px" width="11" height="11" viewBox="0 0 11 11"><circle cx="5.5" cy="5.5" r="4.9" fill="none" stroke="#c5ccd1" stroke-width="1"/><path d="M4 4.3C4 3.4 4.7 2.8 5.5 2.8C6.3 2.8 7 3.4 7 4.2C7 5.2 5.6 5.3 5.6 6.4" fill="none" stroke="#c5ccd1" stroke-width="1"/><circle cx="5.6" cy="8" r="0.6" fill="#c5ccd1"/></svg>
<div class="a" style="left:622.40px;top:498.76px;font-size:11px;line-height:12.65px;color:#e9eef1;font-weight:bold;letter-spacing:-0.459px;">http://pwel.sdxpkgyaq.com/media/adsys/02b070c2-a37b-40ca-966e-c2a1f…</div>
<div class="a" style="left:530.00px;top:515.46px;font-size:11px;line-height:12.65px;color:#9ba7af;-webkit-text-stroke:0.2px #9ba7af;letter-spacing:-0.307px;">04 Jun, 2025</div>
<svg style="left:604.5px;top:515.6px" width="11" height="11" viewBox="0 0 11 11"><circle cx="5.5" cy="5.5" r="4.9" fill="none" stroke="#c5ccd1" stroke-width="1"/><path d="M4 4.3C4 3.4 4.7 2.8 5.5 2.8C6.3 2.8 7 3.4 7 4.2C7 5.2 5.6 5.3 5.6 6.4" fill="none" stroke="#c5ccd1" stroke-width="1"/><circle cx="5.6" cy="8" r="0.6" fill="#c5ccd1"/></svg>
<div class="a" style="left:622.40px;top:515.46px;font-size:11px;line-height:12.65px;color:#e9eef1;font-weight:bold;letter-spacing:-0.444px;">http://pwel.sdxpkgyaq.com/media/adsys/cee8fe1d-1f20-45ab-a089-46f49e…</div>
<div class="a" style="left:530.00px;top:532.16px;font-size:11px;line-height:12.65px;color:#9ba7af;-webkit-text-stroke:0.2px #9ba7af;letter-spacing:-0.307px;">04 Jun, 2025</div>
<svg style="left:604.5px;top:532.3px" width="11" height="11" viewBox="0 0 11 11"><circle cx="5.5" cy="5.5" r="4.9" fill="none" stroke="#c5ccd1" stroke-width="1"/><path d="M4 4.3C4 3.4 4.7 2.8 5.5 2.8C6.3 2.8 7 3.4 7 4.2C7 5.2 5.6 5.3 5.6 6.4" fill="none" stroke="#c5ccd1" stroke-width="1"/><circle cx="5.6" cy="8" r="0.6" fill="#c5ccd1"/></svg>
<div class="a" style="left:622.40px;top:532.16px;font-size:11px;line-height:12.65px;color:#e9eef1;font-weight:bold;letter-spacing:-0.483px;">http://pwel.sdxpkgyaq.com/media/adsys/5546b26c-0405-46bb-adde-ef02d…</div>
<div class="a" style="left:530.00px;top:548.86px;font-size:11px;line-height:12.65px;color:#9ba7af;-webkit-text-stroke:0.2px #9ba7af;letter-spacing:-0.307px;">04 Jun, 2025</div>
<svg style="left:604.5px;top:549.0px" width="11" height="11" viewBox="0 0 11 11"><circle cx="5.5" cy="5.5" r="4.9" fill="none" stroke="#c5ccd1" stroke-width="1"/><path d="M4 4.3C4 3.4 4.7 2.8 5.5 2.8C6.3 2.8 7 3.4 7 4.2C7 5.2 5.6 5.3 5.6 6.4" fill="none" stroke="#c5ccd1" stroke-width="1"/><circle cx="5.6" cy="8" r="0.6" fill="#c5ccd1"/></svg>
<div class="a" style="left:622.40px;top:548.86px;font-size:11px;line-height:12.65px;color:#e9eef1;font-weight:bold;letter-spacing:-0.441px;">http://pwel.sdxpkgyaq.com/media/adsys/55fc3fe0-7633-4878-b798-03da1…</div>
<div class="a" style="left:530.00px;top:565.56px;font-size:11px;line-height:12.65px;color:#9ba7af;-webkit-text-stroke:0.2px #9ba7af;letter-spacing:-0.307px;">04 Jun, 2025</div>
<svg style="left:604.5px;top:565.7px" width="11" height="11" viewBox="0 0 11 11"><circle cx="5.5" cy="5.5" r="4.9" fill="none" stroke="#c5ccd1" stroke-width="1"/><path d="M4 4.3C4 3.4 4.7 2.8 5.5 2.8C6.3 2.8 7 3.4 7 4.2C7 5.2 5.6 5.3 5.6 6.4" fill="none" stroke="#c5ccd1" stroke-width="1"/><circle cx="5.6" cy="8" r="0.6" fill="#c5ccd1"/></svg>
<div class="a" style="left:622.40px;top:565.56px;font-size:11px;line-height:12.65px;color:#e9eef1;font-weight:bold;letter-spacing:-0.473px;">http://pwel.sdxpkgyaq.com/media/adsys/f0b69ed6-ec06-4830-bfcb-cca50…</div>
</body></html>
